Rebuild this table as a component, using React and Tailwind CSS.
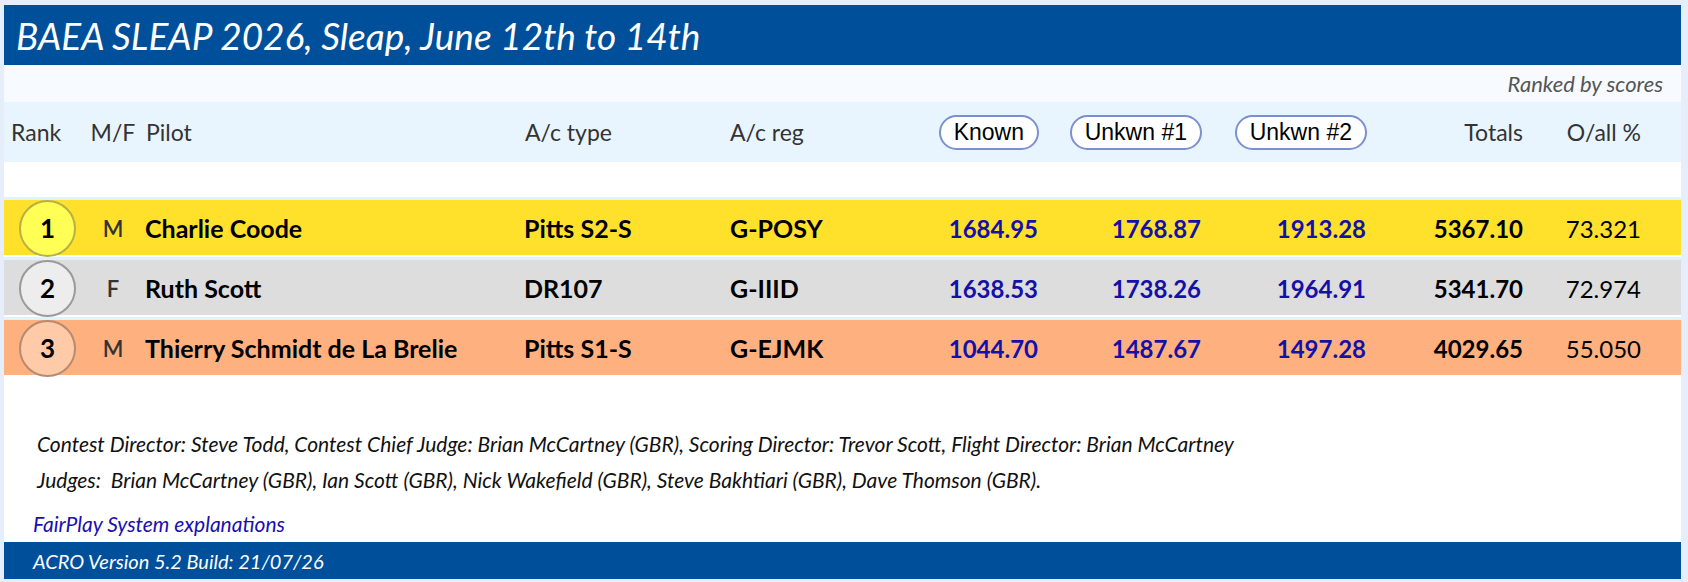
import React from "react";

const results = [
  {
    rank: 1, sex: "M", pilot: "Charlie Coode", type: "Pitts S2-S", reg: "G-POSY",
    scores: ["1684.95", "1768.87", "1913.28"], total: "5367.10", pct: "73.321",
    row: "bg-[#ffe12b]", disc: "bg-[#ffff55] border-[#b9b045]",
  },
  {
    rank: 2, sex: "F", pilot: "Ruth Scott", type: "DR107", reg: "G-IIID",
    scores: ["1638.53", "1738.26", "1964.91"], total: "5341.70", pct: "72.974",
    row: "bg-[#dddddd]", disc: "bg-[#ededed] border-[#9a9a9a]",
  },
  {
    rank: 3, sex: "M", pilot: "Thierry Schmidt de La Brelie", type: "Pitts S1-S", reg: "G-EJMK",
    scores: ["1044.70", "1487.67", "1497.28"], total: "4029.65", pct: "55.050",
    row: "bg-[#ffb07f]", disc: "bg-[#ffcaa8] border-[#b88a70]",
  },
];

// column widths follow the scoring sheet layout
const cols = "grid grid-cols-[82px_54px_380px_205px_135px_180px_163px_165px_156px_117px_1fr]";

const Pill = ({ children }) => (
  <span className="inline-flex items-center h-[35px] px-[13px] rounded-full border-2 border-[#7b8fd2] bg-white text-black text-[23px] font-['Liberation_Sans',Arial,sans-serif]">
    {children}
  </span>
);

export default function App() {
  return (
    <div className="min-h-screen bg-[#e6eefb] pl-[4px] pt-[5px] pb-[6px] font-['Lato',sans-serif]">
      <div className="w-[1677px] bg-white">
        {/* Title bar */}
        <div className="h-[60px] bg-[#004f9b] flex items-center pl-[12px]">
          <h1 className="text-white italic text-[37px] leading-none">BAEA SLEAP 2026, Sleap, June 12th to 14th</h1>
        </div>

        <div className="h-[37px] bg-[#f7fbff] flex items-center justify-end pr-[18px]">
          <span className="italic text-[22px] text-[#555]">Ranked by scores</span>
        </div>

        {/* Column headings */}
        <div className={`${cols} h-[60px] bg-[#e9f5fe] items-center text-[23px] text-[#333]`}>
          <div className="pl-[7px]">Rank</div>
          <div className="text-center">M/F</div>
          <div className="pl-[6px]">Pilot</div>
          <div className="pl-[5px]">A/c type</div>
          <div className="pl-[5px]">A/c reg</div>
          <div className="flex justify-end pr-[1px]"><Pill>Known</Pill></div>
          <div className="flex justify-end pr-[1px]"><Pill>Unkwn #1</Pill></div>
          <div className="flex justify-end pr-[1px]"><Pill>Unkwn #2</Pill></div>
          <div className="text-right pr-[1px]">Totals</div>
          <div className="text-right">O/all %</div>
          <div />
        </div>

        <div className="h-[33px]" />

        {/* Results */}
        {results.map((r) => (
          <div key={r.rank} className="border-t-[3px] border-[#dff3fd] mt-[2px]">
            <div className={`${cols} h-[55px] items-center ${r.row} text-[24px] text-black`}>
              <div className="pl-[15px] flex items-center">
                <div className={`w-[57px] h-[57px] rounded-full border-2 ${r.disc} flex items-center justify-center font-bold text-[26px]`}>
                  {r.rank}
                </div>
              </div>
              <div className="text-center text-[#333] font-semibold text-[22px]">{r.sex}</div>
              <div className="pl-[5px] font-bold text-[25px]">{r.pilot}</div>
              <div className="pl-[4px] font-bold text-[25px]">{r.type}</div>
              <div className="pl-[5px] font-bold text-[25px]">{r.reg}</div>
              {r.scores.map((s, i) => (
                <div key={i} className="text-right pr-[2px] font-bold text-[#1410a8]">{s}</div>
              ))}
              <div className="text-right pr-[1px] font-bold">{r.total}</div>
              <div className="text-right">{r.pct}</div>
              <div />
            </div>
          </div>
        ))}

        {/* Officials */}
        <div className="pt-[51px] pl-[29px] italic text-[21px] text-[#111]">
          <p className="h-[36px] leading-[36px] pl-[4px]">
            Contest Director: Steve Todd, Contest Chief Judge: Brian McCartney (GBR), Scoring Director: Trevor Scott, Flight Director: Brian McCartney
          </p>
          <p className="h-[36px] leading-[36px] pl-[4px]">
            Judges:&nbsp; Brian McCartney (GBR), Ian Scott (GBR), Nick Wakefield (GBR), Steve Bakhtiari (GBR), Dave Thomson (GBR).
          </p>
          <p className="h-[44px] leading-[40px] pt-[6px] text-[#1a0fb0]">
            FairPlay System explanations
          </p>
        </div>

        <div className="h-[37px] bg-[#004f9b] flex items-center pl-[29px]">
          <span className="text-white italic text-[20px]">ACRO Version 5.2 Build: 21/07/26</span>
        </div>
      </div>
    </div>
  );
}
